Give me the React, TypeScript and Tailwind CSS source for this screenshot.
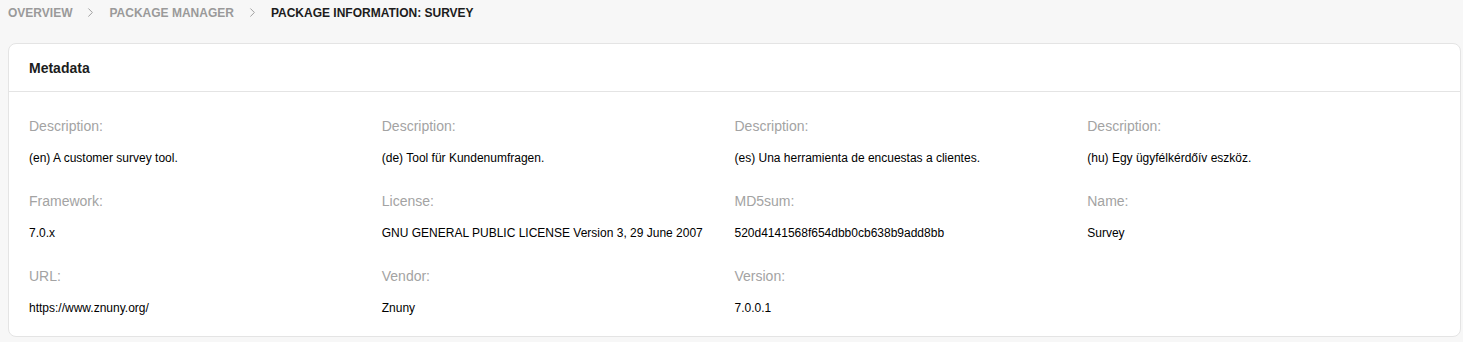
import { ChevronRight } from 'lucide-react';

const fields = [
  { label: 'Description:', value: '(en) A customer survey tool.' },
  { label: 'Description:', value: '(de) Tool für Kundenumfragen.' },
  { label: 'Description:', value: '(es) Una herramienta de encuestas a clientes.' },
  { label: 'Description:', value: '(hu) Egy ügyfélkérdőív eszköz.' },
  { label: 'Framework:', value: '7.0.x' },
  { label: 'License:', value: 'GNU GENERAL PUBLIC LICENSE Version 3, 29 June 2007' },
  { label: 'MD5sum:', value: '520d4141568f654dbb0cb638b9add8bb' },
  { label: 'Name:', value: 'Survey' },
  { label: 'URL:', value: 'https://www.znuny.org/' },
  { label: 'Vendor:', value: 'Znuny' },
  { label: 'Version:', value: '7.0.0.1' },
];

const App = () => {
  return (
    <div className="min-h-[342px] bg-[#f7f7f7] pl-2 pr-[2px] font-['Liberation_Sans',Arial,sans-serif]">
      {/* Breadcrumb */}
      <nav className="flex h-[25px] items-center text-xs font-bold uppercase">
        <span className="text-[#9a9a9a]">Overview</span>
        <ChevronRight className="mx-[11px] h-[15px] w-[15px] text-[#9a9a9a]" strokeWidth={1.5} />
        <span className="text-[#9a9a9a]">Package Manager</span>
        <ChevronRight className="mx-[11px] h-[15px] w-[15px] text-[#9a9a9a]" strokeWidth={1.5} />
        <span className="text-[#1c1c1c]">Package Information: Survey</span>
      </nav>

      {/* Metadata card */}
      <div className="mt-[18px] rounded-lg border border-[#e4e4e4] bg-white">
        <div className="flex h-[48px] items-center border-b border-[#e4e4e4] px-5 text-sm font-bold text-[#1c1c1c]">
          Metadata
        </div>
        <div className="grid grid-cols-4 gap-y-[25px] px-5 pt-6 pb-5">
          {fields.map((f, i) => (
            <div key={i} className="pr-4">
              <div className="text-sm leading-5 text-[#a3a3a3]">{f.label}</div>
              <div className="mt-[14px] text-xs leading-4 text-black">{f.value}</div>
            </div>
          ))}
        </div>
      </div>
    </div>
  );
};

export default App;
